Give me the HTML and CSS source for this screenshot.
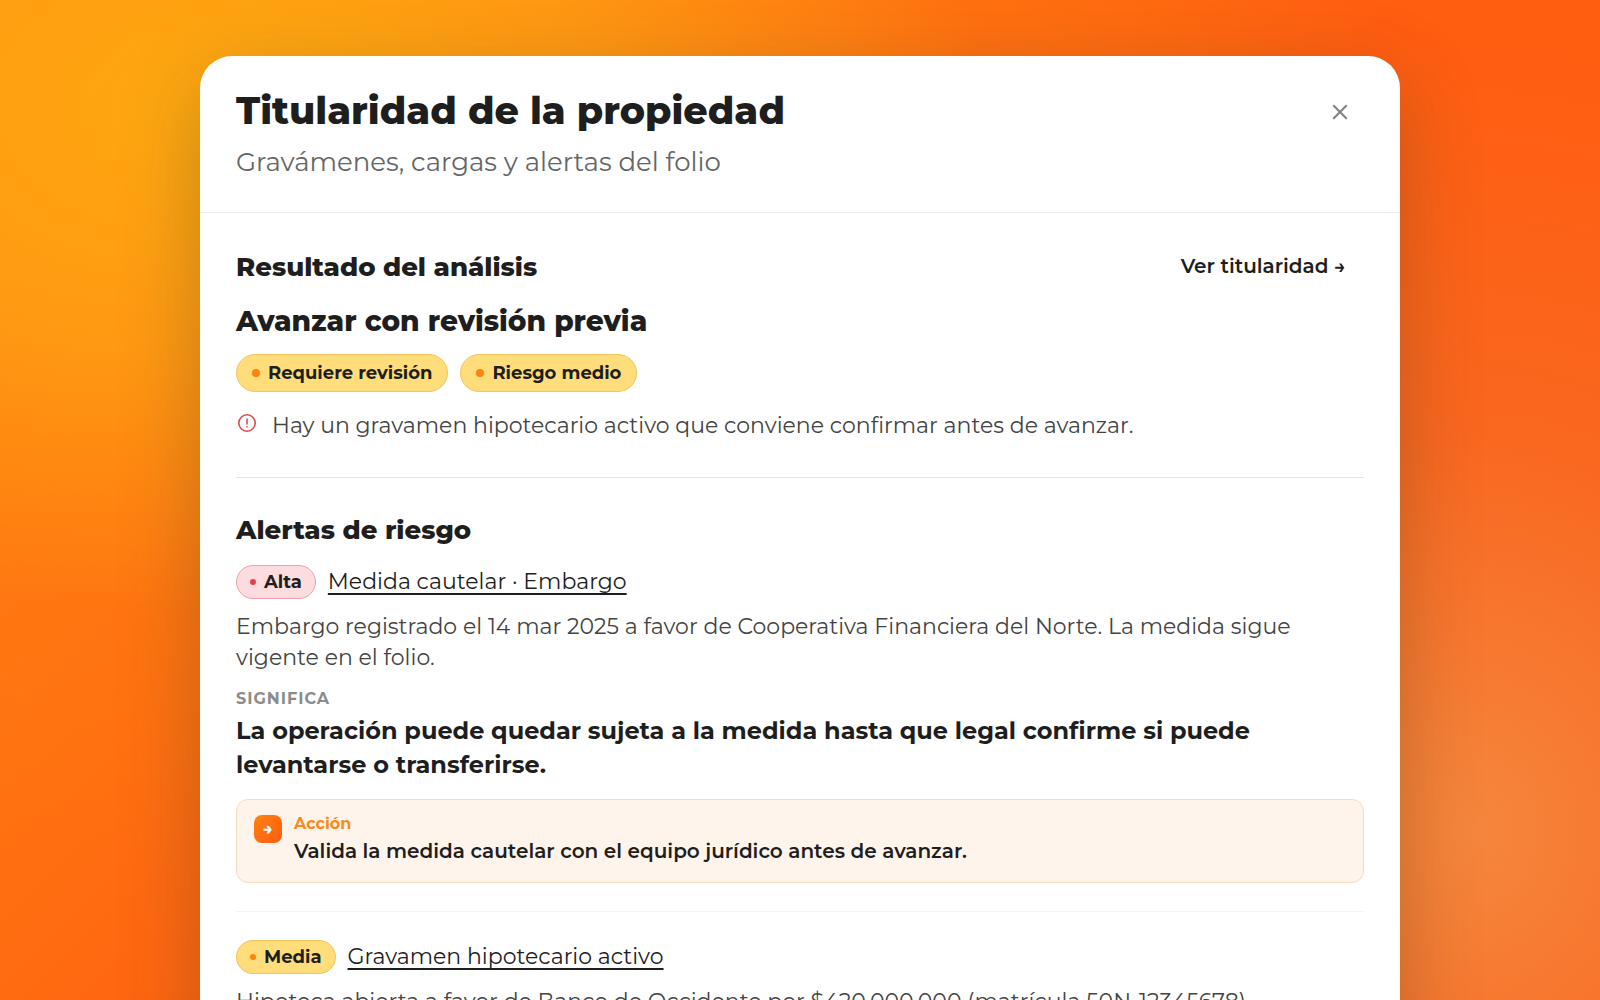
FILE: index.html
```html
<!DOCTYPE html>
<html lang="es">
<head>
<meta charset="utf-8">
<meta name="viewport" content="width=device-width, initial-scale=1">
<title>Titularidad de la propiedad</title>
<link rel="stylesheet" href="styles.css">
</head>
<body>
<main class="stage">
  <article class="sheet" role="dialog" aria-labelledby="sheet-title">
    <header class="sheet-header">
      <div class="sheet-heading">
        <h1 class="sheet-title" id="sheet-title">Titularidad de la propiedad</h1>
        <p class="sheet-subtitle">Gravámenes, cargas y alertas del folio</p>
      </div>
      <button class="close" type="button" aria-label="Cerrar">
        <svg width="16" height="16" viewBox="0 0 16 16" fill="none" stroke="currentColor" stroke-width="2" stroke-linecap="round"><path d="M1.8 1.8l12.4 12.4M14.2 1.8L1.8 14.2"/></svg>
      </button>
    </header>
    <div class="sheet-body">
      <section class="result">
        <div class="section-head">
          <h2 class="section-title">Resultado del análisis</h2>
          <a class="more" href="#titularidad">Ver titularidad →</a>
        </div>
        <p class="verdict">Avanzar con revisión previa</p>
        <div class="pills">
          <span class="pill medium">Requiere revisión</span>
          <span class="pill medium">Riesgo medio</span>
        </div>
        <p class="reason">
          <svg class="reason-icon" width="20" height="20" viewBox="0 0 20 20" fill="none" stroke="currentColor" stroke-width="1.6" stroke-linecap="round"><circle cx="10" cy="10" r="8.2"/><path d="M10 6v5"/><path d="M10 13.8v.1"/></svg>
          <span>Hay un gravamen hipotecario activo que conviene confirmar antes de avanzar.</span>
        </p>
      </section>
      <section class="alerts">
        <h2 class="section-title">Alertas de riesgo</h2>
        <article class="alert">
          <div class="alert-head">
            <span class="pill small high">Alta</span>
            <a class="alert-link" href="#embargo">Medida cautelar · Embargo</a>
          </div>
          <p class="alert-text">Embargo registrado el 14 mar 2025 a favor de Cooperativa Financiera del Norte. La medida sigue vigente en el folio.</p>
          <p class="label">SIGNIFICA</p>
          <p class="meaning">La operación puede quedar sujeta a la medida hasta que legal confirme si puede levantarse o transferirse.</p>
          <div class="action">
            <span class="action-icon">→</span>
            <div>
              <p class="action-label">Acción</p>
              <p class="action-text">Valida la medida cautelar con el equipo jurídico antes de avanzar.</p>
            </div>
          </div>
        </article>
        <article class="alert">
          <div class="alert-head">
            <span class="pill small medium">Media</span>
            <a class="alert-link" href="#gravamen">Gravamen hipotecario activo</a>
          </div>
          <p class="alert-text">Hipoteca abierta a favor de Banco de Occidente por $420.000.000 (matrícula 50N-12345678).</p>
        </article>
      </section>
    </div>
  </article>
</main>
</body>
</html>
```
FILE: styles.css
```css
* { box-sizing: border-box; }

body, h1, h2, p { margin: 0; }

body {
  font-family: Montserrat, Inter, "Open Sans", sans-serif;
  color: #1e1e1e;
}

.stage {
  height: 100vh;
  overflow: hidden;
  padding-top: 56px;
  background:
    radial-gradient(42% 80% at 92% 83%, rgba(243, 145, 72, .8), rgba(243, 115, 50, .45) 50%, rgba(250, 95, 20, 0)),
    radial-gradient(72% 76% at 14% 11%, #ffa911, rgba(255, 160, 18, .8) 32%, rgba(255, 120, 16, .4) 66%, rgba(255, 96, 16, 0)),
    linear-gradient(135deg, #ff8c14, #ff5d10 55%);
}

.sheet {
  width: 75%;
  margin: 0 auto;
  background: #fff;
  border-radius: 32px;
  box-shadow: 0 24px 80px rgba(60, 60, 30, .3);
}

.sheet-header {
  display: flex;
  justify-content: space-between;
  align-items: flex-start;
  padding: 32px 36px;
  border-bottom: 1px solid #ececec;
}

.sheet-title {
  font-size: 38px;
  line-height: 46px;
  font-weight: 800;
}

.sheet-subtitle {
  margin-top: 10px;
  font-size: 26px;
  line-height: 36px;
  font-weight: 400;
  color: #666;
}

.close {
  display: grid;
  place-items: center;
  width: 48px;
  height: 48px;
  padding: 0;
  border: 0;
  background: none;
  color: #808080;
}

.sheet-body { padding: 36px; }

.section-head {
  display: flex;
  justify-content: space-between;
  align-items: flex-start;
}

.section-title {
  font-size: 26px;
  line-height: 36px;
  font-weight: 800;
}

.more {
  padding-right: 18px;
  font-size: 20px;
  line-height: 34px;
  font-weight: 600;
  color: inherit;
  text-decoration: none;
}

.verdict {
  margin-top: 18px;
  font-size: 28px;
  line-height: 36px;
  font-weight: 800;
}

.pills {
  display: flex;
  gap: 12px;
  margin-top: 15px;
}

.pill {
  display: inline-flex;
  align-items: center;
  gap: 8px;
  height: 38px;
  padding: 0 15px 1px;
  border: 1px solid;
  border-radius: 19px;
  font-size: 18px;
  font-weight: 700;
}

.pill::before {
  content: "";
  width: 8px;
  height: 8px;
  border-radius: 50%;
  background: #ff830f;
}

.pill.small {
  height: 34px;
  padding: 0 13px 1px;
}

.pill.small::before {
  width: 6px;
  height: 6px;
}

.medium {
  background: #ffdd7a;
  border-color: #f5c35c;
}

.high {
  background: #fcdcde;
  border-color: #f0a0ae;
}

.pill.high::before { background: #e5404a; }

.reason {
  display: flex;
  align-items: flex-start;
  gap: 15px;
  margin-top: 18px;
  padding-left: 1px;
  font-size: 22px;
  line-height: 31px;
  font-weight: 400;
  color: #444;
}

.reason-icon {
  flex: none;
  margin-top: 3px;
  color: #e04a50;
}

.result {
  padding-bottom: 36px;
  border-bottom: 1px solid #e4e4e4;
}

.alerts { padding-top: 34px; }

.alert { padding: 17px 0 28px; }

.alert + .alert {
  padding-top: 28px;
  border-top: 1px solid #f3f3f3;
}

.alert-head {
  display: flex;
  align-items: flex-start;
  gap: 12px;
}

.alert-link {
  font-size: 22px;
  line-height: 34px;
  font-weight: 400;
  color: inherit;
  text-decoration-thickness: 2px;
  text-underline-offset: 4px;
}

.alert-text {
  margin-top: 12px;
  font-size: 22px;
  line-height: 31px;
  font-weight: 400;
  color: #444;
}

.label {
  margin-top: 16px;
  font-size: 16px;
  line-height: 20px;
  font-weight: 700;
  letter-spacing: 1px;
  color: #8c8c8c;
}

.meaning {
  margin-top: 5px;
  font-size: 24px;
  line-height: 34px;
  font-weight: 700;
}

.action {
  display: flex;
  align-items: flex-start;
  gap: 12px;
  margin-top: 17px;
  padding: 15px 17px 17px;
  border: 1px solid #fad9bd;
  border-radius: 12px;
  background: #fff4eb;
}

.action-icon {
  flex: none;
  display: grid;
  place-items: center;
  width: 28px;
  height: 28px;
  border-radius: 8px;
  background: linear-gradient(135deg, #ff8412, #ff5a10);
  color: #fff;
  font-size: 16px;
  line-height: 28px;
  font-weight: 800;
}

.action-label {
  font-size: 16px;
  line-height: 18px;
  font-weight: 700;
  color: #f98a1c;
}

.action-text {
  margin-top: 4px;
  font-size: 20px;
  line-height: 28px;
  font-weight: 600;
}
```
